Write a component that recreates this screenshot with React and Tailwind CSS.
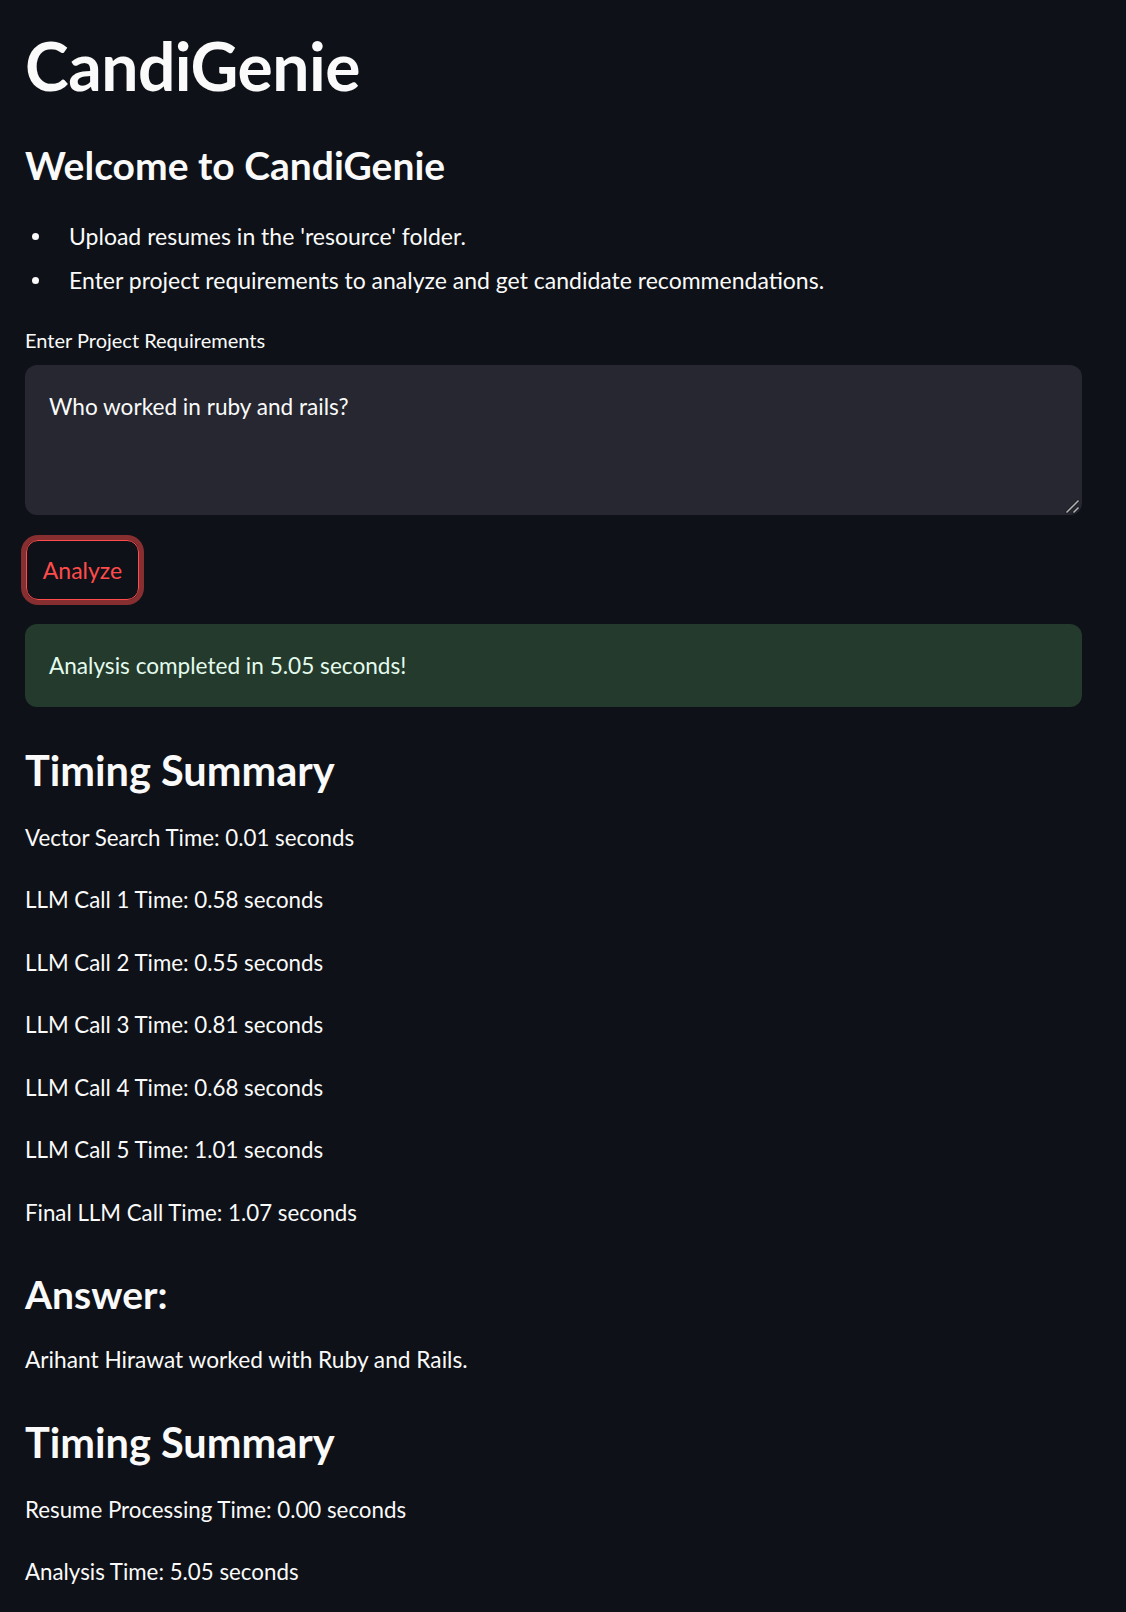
import { useState } from "react";

const FONT = { fontFamily: "Lato, 'Noto Sans', sans-serif" };

const STAGE_TIMES = [
  "Vector Search Time: 0.01 seconds",
  "LLM Call 1 Time: 0.58 seconds",
  "LLM Call 2 Time: 0.55 seconds",
  "LLM Call 3 Time: 0.81 seconds",
  "LLM Call 4 Time: 0.68 seconds",
  "LLM Call 5 Time: 1.01 seconds",
  "Final LLM Call Time: 1.07 seconds",
];

const TOTAL_TIMES = [
  "Resume Processing Time: 0.00 seconds",
  "Analysis Time: 5.05 seconds",
];

function TimeRows({ rows }) {
  return (
    <div className="flex flex-col gap-[25.5px]">
      {rows.map((row) => (
        <p key={row} className="text-[22.3px] leading-[37px] text-[#fafafa]">
          {row}
        </p>
      ))}
    </div>
  );
}

export default function App() {
  const [query, setQuery] = useState("Who worked in ruby and rails?");

  return (
    <div
      className="min-h-[1612px] w-full bg-[#0e1117] text-[#fafafa] antialiased"
      style={FONT}
    >
      <main className="flex w-[1082px] flex-col pl-[25px] pt-[27px]">
        {/* TITLE */}
        <h1 className="text-[66px] font-bold leading-[77px] tracking-[-0.5px]">
          CandiGenie
        </h1>
        <h2 className="mt-[36px] text-[39px] font-bold leading-[50px]">
          Welcome to CandiGenie
        </h2>

        {/* INSTRUCTIONS */}
        <ul className="mt-[28px] flex flex-col gap-[7px]">
          <li className="flex items-center text-[23px] leading-[37px]">
            <span className="ml-[7px] mr-[30px] h-[7px] w-[7px] rounded-full bg-[#fafafa]" />
            Upload resumes in the 'resource' folder.
          </li>
          <li className="flex items-center text-[23px] leading-[37px]">
            <span className="ml-[7px] mr-[30px] h-[7px] w-[7px] rounded-full bg-[#fafafa]" />
            Enter project requirements to analyze and get candidate recommendations.
          </li>
        </ul>

        {/* INPUT */}
        <label className="mt-[27px] text-[20px] leading-[28px]">
          Enter Project Requirements
        </label>
        <div className="relative mt-[11px]">
          <textarea
            value={query}
            onChange={(e) => setQuery(e.target.value)}
            className="block h-[150px] w-full resize-none rounded-[12px] bg-[#262730] px-[24px] py-[23px] text-[22.6px] leading-[37px] text-[#fafafa] outline-none"
            style={FONT}
          />
          {/* resize grip */}
          <svg
            className="pointer-events-none absolute bottom-[1px] right-[2px]"
            width="16"
            height="16"
            viewBox="0 0 16 16"
          >
            <g stroke="#1a1b20" strokeWidth="3" strokeLinecap="square">
              <line x1="3" y1="14" x2="14" y2="3" />
              <line x1="10" y1="14" x2="14" y2="10" />
            </g>
            <g stroke="#b4b4b8" strokeWidth="1.5" strokeLinecap="square">
              <line x1="3" y1="14" x2="14" y2="3" />
              <line x1="10" y1="14" x2="14" y2="10" />
            </g>
          </svg>
        </div>

        <div className="mt-[25px]">
          <button className="ml-[1px] h-[60px] w-[113px] rounded-[12px] border border-[#ff4b4b] bg-transparent text-[23px] text-[#ff4b4b] shadow-[0_0_0_5px_rgba(255,75,75,0.5)]">
            Analyze
          </button>
        </div>

        {/* RESULT */}
        <div className="mt-[24px] flex h-[83px] items-center rounded-[12px] bg-[#233a2c] px-[24px] text-[22.6px] text-[#e4fbec]">
          Analysis completed in 5.05 seconds!
        </div>

        <h2 className="mt-[36px] text-[41.5px] font-bold leading-[54px]">
          Timing Summary
        </h2>
        <div className="mt-[21.5px]">
          <TimeRows rows={STAGE_TIMES} />
        </div>

        <h3 className="mt-[38px] text-[39px] font-bold leading-[50px]">
          Answer:
        </h3>
        <p className="mt-[22.5px] text-[22.7px] leading-[37px]">
          Arihant Hirawat worked with Ruby and Rails.
        </p>

        <h2 className="mt-[37px] text-[41.5px] font-bold leading-[54px]">
          Timing Summary
        </h2>
        <div className="mt-[21.5px]">
          <TimeRows rows={TOTAL_TIMES} />
        </div>
      </main>
    </div>
  );
}
